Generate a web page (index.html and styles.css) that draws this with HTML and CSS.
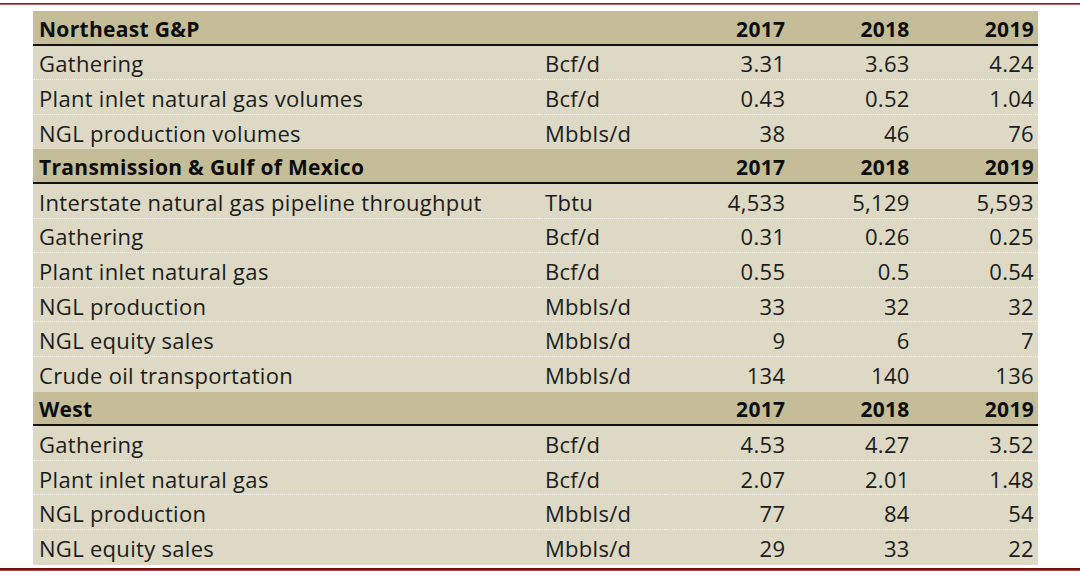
FILE: index.html
```html
<!DOCTYPE html>
<html>
<head>
<meta charset="utf-8">
<link rel="stylesheet" href="styles.css">
</head>
<body>
<div class="rule-top"></div>
<table class="ops">
  <colgroup>
    <col class="c-label"><col class="c-unit"><col class="c-num"><col class="c-num"><col class="c-num">
  </colgroup>
  <tr class="head"><td>Northeast G&amp;P</td><td></td><td class="n">2017</td><td class="n">2018</td><td class="n">2019</td></tr>
  <tr><td>Gathering</td><td>Bcf/d</td><td class="n">3.31</td><td class="n">3.63</td><td class="n">4.24</td></tr>
  <tr><td>Plant inlet natural gas volumes</td><td>Bcf/d</td><td class="n">0.43</td><td class="n">0.52</td><td class="n">1.04</td></tr>
  <tr class="last"><td>NGL production volumes</td><td>Mbbls/d</td><td class="n">38</td><td class="n">46</td><td class="n">76</td></tr>
  <tr class="head"><td>Transmission &amp; Gulf of Mexico</td><td></td><td class="n">2017</td><td class="n">2018</td><td class="n">2019</td></tr>
  <tr><td>Interstate natural gas pipeline throughput</td><td>Tbtu</td><td class="n">4,533</td><td class="n">5,129</td><td class="n">5,593</td></tr>
  <tr><td>Gathering</td><td>Bcf/d</td><td class="n">0.31</td><td class="n">0.26</td><td class="n">0.25</td></tr>
  <tr><td>Plant inlet natural gas</td><td>Bcf/d</td><td class="n">0.55</td><td class="n">0.5</td><td class="n">0.54</td></tr>
  <tr><td>NGL production</td><td>Mbbls/d</td><td class="n">33</td><td class="n">32</td><td class="n">32</td></tr>
  <tr><td>NGL equity sales</td><td>Mbbls/d</td><td class="n">9</td><td class="n">6</td><td class="n">7</td></tr>
  <tr class="last"><td>Crude oil transportation</td><td>Mbbls/d</td><td class="n">134</td><td class="n">140</td><td class="n">136</td></tr>
  <tr class="head"><td>West</td><td></td><td class="n">2017</td><td class="n">2018</td><td class="n">2019</td></tr>
  <tr><td>Gathering</td><td>Bcf/d</td><td class="n">4.53</td><td class="n">4.27</td><td class="n">3.52</td></tr>
  <tr><td>Plant inlet natural gas</td><td>Bcf/d</td><td class="n">2.07</td><td class="n">2.01</td><td class="n">1.48</td></tr>
  <tr><td>NGL production</td><td>Mbbls/d</td><td class="n">77</td><td class="n">84</td><td class="n">54</td></tr>
  <tr class="last"><td>NGL equity sales</td><td>Mbbls/d</td><td class="n">29</td><td class="n">33</td><td class="n">22</td></tr>
</table>
<div class="rule-bottom"></div>
</body>
</html>
```
FILE: styles.css
```css
html, body {
  margin: 0;
  padding: 0;
  background: #ffffff;
}
body {
  font-family: "Open Sans", "Lato", sans-serif;
  color: #1c1c1c;
}
.rule-top {
  margin-top: 3px;
  height: 1px;
  background: #8c1d1d;
  border-bottom: 1px solid #b86a6a;
}
.rule-bottom {
  margin-top: 3px;
  height: 2px;
  background: #7a1010;
  border-bottom: 1px solid #a85050;
}
.ops {
  margin: 6px 0 0 33px;
  width: 1005px;
  border-collapse: collapse;
  table-layout: fixed;
  font-size: 22px;
  letter-spacing: 0.3px;
}
.c-label { width: 506px; }
.c-unit { width: 126px; }
.c-num { width: 124.33px; }
.ops td {
  height: 31.6px;
  padding: 2px 4px 0 6px;
  background: #ddd9c4;
  border-bottom: 1px dotted #f4f2ea;
  white-space: nowrap;
  line-height: 1;
  vertical-align: middle;
}
.ops td.n {
  text-align: right;
}
.ops tr.last td {
  border-bottom: 1px solid #ddd9c4;
}
.ops tr.head td {
  background: #c4bd97;
  font-weight: bold;
  font-size: 21px;
  color: #0d0d0d;
  border-bottom: 2px solid #111111;
  height: 28.6px;
  padding-top: 4px;
}
```
